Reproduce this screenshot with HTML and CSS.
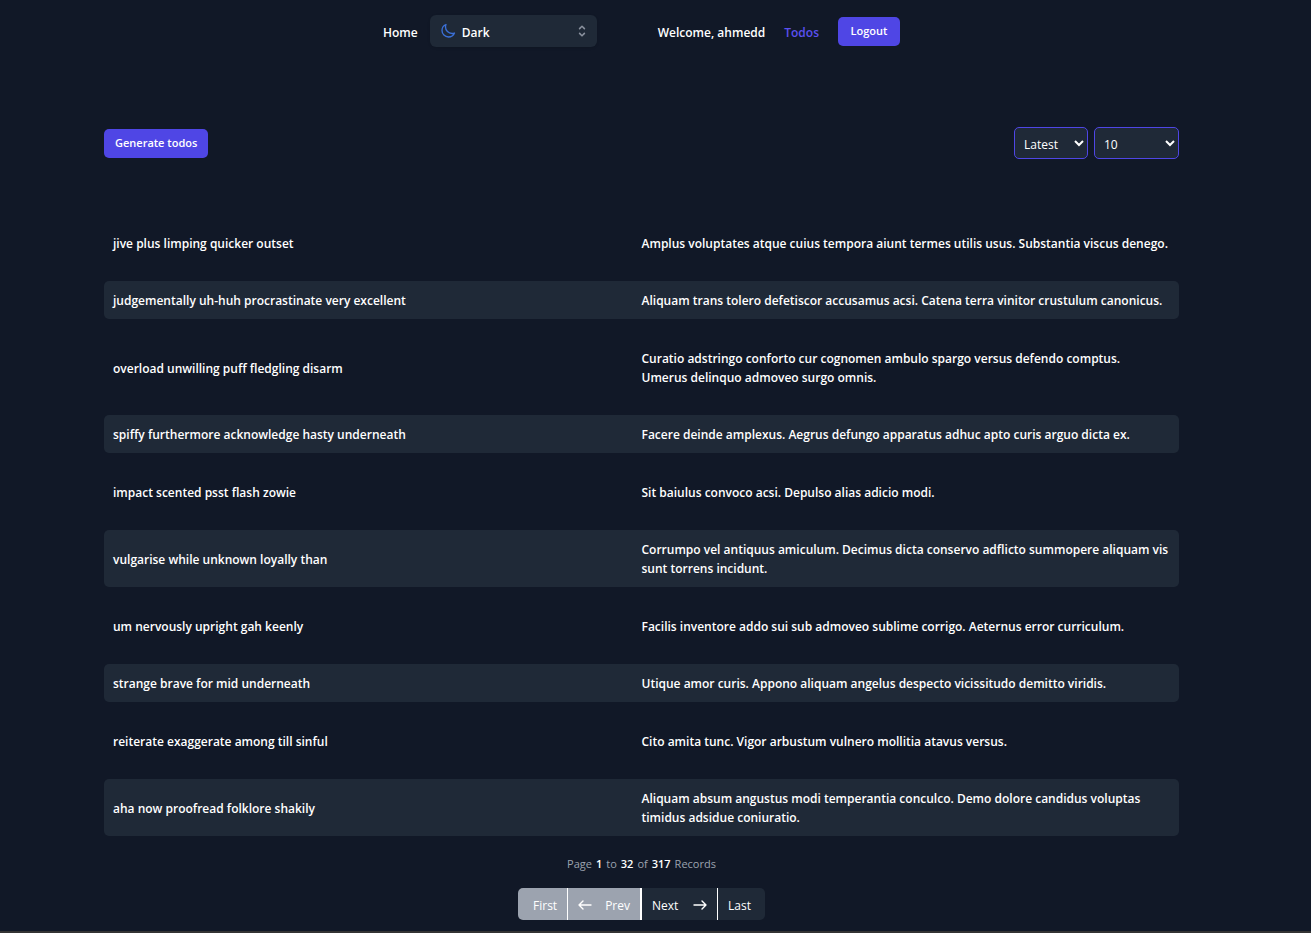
FILE: index.html
```html
<!DOCTYPE html>
<html lang="en">
<head>
<meta charset="utf-8">
<title>Todos</title>
<link rel="stylesheet" href="styles.css">
</head>
<body>
<header class="header">
  <nav class="nav">
    <a class="nav-link" href="#">Home</a>
    <button class="theme" type="button" aria-haspopup="listbox">
      <svg class="theme-icon" viewBox="0 0 24 24" fill="none" stroke="currentColor" stroke-width="2" stroke-linecap="round" stroke-linejoin="round" aria-hidden="true"><path d="M21.752 15.002A9.718 9.718 0 0118 15.75c-5.385 0-9.75-4.365-9.75-9.75 0-1.33.266-2.597.748-3.752A9.753 9.753 0 003 11.25C3 16.635 7.365 21 12.75 21a9.753 9.753 0 009.002-5.998z"/></svg>
      <span class="theme-name">Dark</span>
      <svg class="theme-chevron" viewBox="0 0 20 20" fill="currentColor" aria-hidden="true"><path fill-rule="evenodd" d="M10 3a1 1 0 01.707.293l3 3a1 1 0 01-1.414 1.414L10 5.414 7.707 7.707a1 1 0 01-1.414-1.414l3-3A1 1 0 0110 3zm-3.707 9.293a1 1 0 011.414 0L10 14.586l2.293-2.293a1 1 0 011.414 1.414l-3 3a1 1 0 01-1.414 0l-3-3a1 1 0 010-1.414z" clip-rule="evenodd"/></svg>
    </button>
  </nav>
  <div class="account">
    <span class="welcome">Welcome, ahmedd</span>
    <a class="nav-link nav-link-active" href="#">Todos</a>
    <button class="button button-logout" type="button">Logout</button>
  </div>
</header>
<main class="main">
  <div class="toolbar">
    <button class="button" type="button">Generate todos</button>
    <div class="filters">
      <select class="select select-order" aria-label="Order"><option>Latest</option><option>Oldest</option></select>
      <select class="select select-size" aria-label="Todos per page"><option>10</option><option>20</option></select>
    </div>
  </div>
  <table class="todos">
    <tbody>
      <tr class="todo"><td>jive plus limping quicker outset</td><td>Amplus voluptates atque cuius tempora aiunt termes utilis usus. Substantia viscus denego.</td></tr>
      <tr class="todo"><td>judgementally uh-huh procrastinate very excellent</td><td>Aliquam trans tolero defetiscor accusamus acsi. Catena terra vinitor crustulum canonicus.</td></tr>
      <tr class="todo"><td>overload unwilling puff fledgling disarm</td><td>Curatio adstringo conforto cur cognomen ambulo spargo versus defendo comptus.<br>Umerus delinquo admoveo surgo omnis.</td></tr>
      <tr class="todo"><td>spiffy furthermore acknowledge hasty underneath</td><td>Facere deinde amplexus. Aegrus defungo apparatus adhuc apto curis arguo dicta ex.</td></tr>
      <tr class="todo"><td>impact scented psst flash zowie</td><td>Sit baiulus convoco acsi. Depulso alias adicio modi.</td></tr>
      <tr class="todo"><td>vulgarise while unknown loyally than</td><td>Corrumpo vel antiquus amiculum. Decimus dicta conservo adflicto summopere aliquam vis sunt torrens incidunt.</td></tr>
      <tr class="todo"><td>um nervously upright gah keenly</td><td>Facilis inventore addo sui sub admoveo sublime corrigo. Aeternus error curriculum.</td></tr>
      <tr class="todo"><td>strange brave for mid underneath</td><td>Utique amor curis. Appono aliquam angelus despecto vicissitudo demitto viridis.</td></tr>
      <tr class="todo"><td>reiterate exaggerate among till sinful</td><td>Cito amita tunc. Vigor arbustum vulnero mollitia atavus versus.</td></tr>
      <tr class="todo"><td>aha now proofread folklore shakily</td><td>Aliquam absum angustus modi temperantia conculco. Demo dolore candidus voluptas timidus adsidue coniuratio.</td></tr>
    </tbody>
  </table>
  <div class="paging">
    <p class="summary"><span>Page</span> <b>1</b> <span>to</span> <b>32</b> <span>of</span> <b>317</b> <span>Records</span></p>
    <div class="pager">
      <button class="page-button page-first" type="button" disabled>First</button>
      <button class="page-button page-prev" type="button" disabled>
        <svg class="arrow" viewBox="0 0 14 10" fill="none" stroke="currentColor" stroke-width="1.4" stroke-linecap="round" stroke-linejoin="round" aria-hidden="true"><path d="M13 5H1m0 0 4-4M1 5l4 4"/></svg>
        Prev
      </button>
      <button class="page-button page-next" type="button">
        Next
        <svg class="arrow" viewBox="0 0 14 10" fill="none" stroke="currentColor" stroke-width="1.4" stroke-linecap="round" stroke-linejoin="round" aria-hidden="true"><path d="M1 5h12m0 0L9 1m4 4L9 9"/></svg>
      </button>
      <button class="page-button page-last" type="button">Last</button>
    </div>
  </div>
</main>
</body>
</html>
```

FILE: styles.css
```css
* {
  box-sizing: border-box;
}

body {
  margin: 0;
  min-height: 100vh;
  padding: 0 132px 11px 104px;
  border-bottom: 2px solid #333333;
  background: #111827;
  color: #ffffff;
  font-family: "Open Sans", "Noto Sans", sans-serif;
  font-size: 12px;
  line-height: 19px;
}

button,
select {
  margin: 0;
  border: 0;
  color: inherit;
  font: inherit;
}

.header {
  display: flex;
  justify-content: center;
  align-items: center;
  gap: 61px;
  height: 62px;
  font-weight: 600;
}

.nav {
  display: flex;
  align-items: center;
  gap: 12px;
}

.nav-link,
.welcome,
.theme-name {
  padding-top: 2px;
}

.nav-link {
  color: inherit;
  text-decoration: none;
}

.nav-link-active {
  color: #5b50f0;
}

.theme {
  display: flex;
  align-items: center;
  gap: 6px;
  width: 167px;
  height: 32px;
  padding: 0 7px 0 10px;
  border-radius: 6px;
  background: #1f2937;
  box-shadow: 0 1px 3px rgba(0, 0, 0, 0.12);
}

.theme-icon {
  width: 16px;
  height: 16px;
  color: #3b70d8;
}

.theme-name {
  flex: 1;
  text-align: left;
}

.theme-chevron {
  width: 16px;
  height: 16px;
  color: #8a919e;
}

.account {
  display: flex;
  align-items: center;
  gap: 19px;
}

.button {
  height: 29px;
  padding: 0 11px 1px;
  border-radius: 5px;
  background: #4f46e5;
  font-size: 11px;
  font-weight: 600;
}

.button-logout {
  min-width: 62px;
}

.toolbar {
  display: flex;
  justify-content: space-between;
  align-items: center;
  padding: 65px 0;
}

.filters {
  display: flex;
  gap: 6px;
}

.select {
  height: 32px;
  padding: 2px 5px 0;
  border: 1px solid #4f46e5;
  border-radius: 5px;
  background: #1f2937;
}

.select-order {
  width: 74px;
}

.select-size {
  width: 85px;
}

.todos,
.todos tbody {
  display: block;
}

.todo {
  display: grid;
  grid-template-columns: 1fr 1fr;
  align-items: center;
  margin-bottom: 20px;
  border-radius: 5px;
  font-weight: 600;
}

.todo:nth-child(odd) {
  margin-bottom: 19px;
}

.todo:nth-child(even) {
  background: #1f2937;
}

.todo:last-child {
  margin-bottom: 0;
}

.todo td {
  padding: 10px 9px 9px;
}

.todo td + td {
  padding-left: 0;
}

.paging {
  display: flex;
  flex-direction: column;
  align-items: center;
  gap: 15px;
  padding-top: 18px;
}

.summary {
  display: flex;
  gap: 4px;
  margin: 0;
  color: #9ca3af;
  font-size: 11px;
}

.summary b {
  color: #ffffff;
  font-weight: 600;
}

.pager {
  display: flex;
  overflow: hidden;
  border-radius: 5px;
}

.page-button {
  display: flex;
  justify-content: space-between;
  align-items: center;
  height: 32px;
  padding: 2px 10px 0;
  background: #1f2937;
}

.page-button:disabled {
  background: #9ca3af;
}

.page-first {
  width: 50px;
  padding-left: 15px;
  border-right: 1px solid #ffffff;
}

.page-prev {
  width: 74px;
  border-right: 2px solid #ffffff;
}

.page-next {
  width: 76px;
  border-right: 1px solid #ffffff;
}

.page-last {
  width: 47px;
}

.arrow {
  width: 14px;
  height: 10px;
}
```
